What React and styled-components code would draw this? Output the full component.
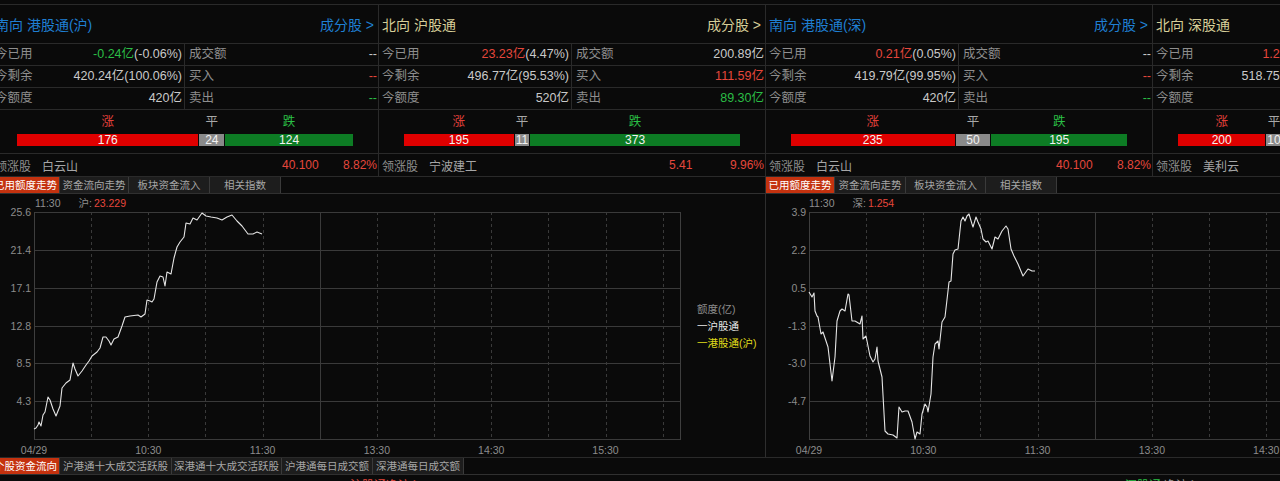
import styled, { createGlobalStyle } from "styled-components";

const FONT = `"Liberation Sans", "Noto Sans CJK SC", sans-serif`;

const C = {
  bg: "#0a0a0a",
  line: "#2a2a2a",
  label: "#8e8e8e",
  value: "#c9c9c9",
  up: "#e5473c",
  down: "#2bbd46",
  blue: "#1f7fd2",
  gold: "#d6ce98",
};

const tone = (t) => (t === "up" ? C.up : t === "down" ? C.down : C.value);

const GlobalStyle = createGlobalStyle`
  html, body {
    margin: 0;
    padding: 0;
    background: ${C.bg};
  }
  body {
    font-family: ${FONT};
    font-size: 12px;
    color: ${C.value};
    overflow: hidden;
  }
`;

const panels = [
  {
    dir: "南向",
    name: "港股通(沪)",
    north: false,
    used: ["-0.24亿", "down", "(-0.06%)"],
    remain: "420.24亿(100.06%)",
    quota: "420亿",
    turnover: ["--", "flat"],
    buy: ["--", "up"],
    sell: ["--", "down"],
    breadth: [176, 24, 124],
    leader: ["白云山", "40.100", "8.82%"],
  },
  {
    dir: "北向",
    name: "沪股通",
    north: true,
    used: ["23.23亿", "up", "(4.47%)"],
    remain: "496.77亿(95.53%)",
    quota: "520亿",
    turnover: ["200.89亿", "flat"],
    buy: ["111.59亿", "up"],
    sell: ["89.30亿", "down"],
    breadth: [195, 11, 373],
    leader: ["宁波建工", "5.41", "9.96%"],
  },
  {
    dir: "南向",
    name: "港股通(深)",
    north: false,
    used: ["0.21亿", "up", "(0.05%)"],
    remain: "419.79亿(99.95%)",
    quota: "420亿",
    turnover: ["--", "flat"],
    buy: ["--", "up"],
    sell: ["--", "down"],
    breadth: [235, 50, 195],
    leader: ["白云山", "40.100", "8.82%"],
  },
  {
    dir: "北向",
    name: "深股通",
    north: true,
    used: ["1.25亿", "up", "(0.24%)"],
    remain: "518.75亿(99.76%)",
    quota: "520亿",
    turnover: ["163.52亿", "flat"],
    buy: ["82.38亿", "up"],
    sell: ["81.14亿", "down"],
    breadth: [200, 10, 530],
    leader: ["美利云", "9.36", "10.00%"],
  },
];

const leftPts = [
  [34, 430], [36, 429], [38, 426], [39, 423], [41, 427], [43, 416], [45, 413], [48, 398],
  [50, 401], [53, 410], [56, 417], [60, 407], [62, 389], [66, 384], [70, 381], [73, 364],
  [75, 370], [78, 377], [82, 372], [86, 366], [89, 362], [92, 357], [97, 353], [100, 349],
  [103, 338], [106, 338], [109, 342], [111, 346], [114, 340], [118, 338], [122, 327],
  [125, 318], [130, 317], [138, 316], [141, 318], [145, 315], [147, 301], [150, 302],
  [152, 303], [154, 300], [157, 283], [160, 277], [163, 278], [165, 287], [167, 273],
  [171, 275], [174, 259], [177, 248], [180, 243], [184, 238], [186, 224], [190, 225],
  [193, 219], [197, 221], [202, 214], [206, 217], [211, 218], [217, 219], [222, 221],
  [227, 218], [232, 216], [237, 222], [242, 227], [248, 235], [253, 235], [257, 233],
  [262, 235],
];

const rightPts = [
  [809, 293], [812, 298], [814, 294], [815, 312], [817, 317], [818, 318], [821, 335],
  [823, 333], [827, 345], [828, 348], [832, 382], [835, 358], [837, 322], [840, 312],
  [842, 310], [845, 312], [848, 295], [849, 296], [852, 322], [855, 322], [860, 325],
  [862, 317], [863, 340], [866, 337], [870, 357], [873, 363], [875, 360], [877, 348],
  [878, 362], [882, 378], [885, 432], [888, 435], [893, 436], [897, 439], [899, 408],
  [902, 413], [905, 412], [908, 412], [912, 423], [915, 440], [917, 433], [920, 435],
  [922, 415], [925, 405], [927, 408], [928, 413], [931, 395], [933, 358], [935, 345],
  [938, 342], [939, 350], [942, 323], [945, 318], [948, 292], [949, 283], [951, 282],
  [953, 255], [955, 251], [958, 250], [961, 222], [963, 218], [965, 222], [967, 217],
  [969, 215], [972, 225], [973, 228], [976, 218], [978, 223], [981, 230], [983, 240],
  [986, 243], [988, 242], [992, 250], [995, 238], [998, 240], [1002, 232], [1006, 227],
  [1008, 230], [1011, 250], [1014, 257], [1018, 265], [1023, 277], [1028, 270],
  [1032, 272], [1035, 272],
];

function Card({ p }) {
  const [upN, flatN, downN] = p.breadth;
  return (
    <CardBox>
      <CardHead>
        <Title $north={p.north}>
          {p.dir} {p.name}
        </Title>
        <Constituents $north={p.north}>成分股 &gt;</Constituents>
      </CardHead>

      <StatRow>
        <StatCell $left>
          <Label>今已用</Label>
          <Value>
            <Tone $t={p.used[1]}>{p.used[0]}</Tone>
            {p.used[2]}
          </Value>
        </StatCell>
        <StatCell>
          <Label>成交额</Label>
          <Tone $t={p.turnover[1]}>{p.turnover[0]}</Tone>
        </StatCell>
      </StatRow>
      <StatRow>
        <StatCell $left>
          <Label>今剩余</Label>
          <Value>{p.remain}</Value>
        </StatCell>
        <StatCell>
          <Label>买入</Label>
          <Tone $t={p.buy[1]}>{p.buy[0]}</Tone>
        </StatCell>
      </StatRow>
      <StatRow>
        <StatCell $left>
          <Label>今额度</Label>
          <Value>{p.quota}</Value>
        </StatCell>
        <StatCell>
          <Label>卖出</Label>
          <Tone $t={p.sell[1]}>{p.sell[0]}</Tone>
        </StatCell>
      </StatRow>

      <Breadth>
        <Segment $grow={upN}>
          <SegLabel $t="up">涨</SegLabel>
          <SegBar $t="up">{upN}</SegBar>
        </Segment>
        <Segment $grow={flatN}>
          <SegLabel $t="flat">平</SegLabel>
          <SegBar $t="flat">{flatN}</SegBar>
        </Segment>
        <Segment $grow={downN}>
          <SegLabel $t="down">跌</SegLabel>
          <SegBar $t="down">{downN}</SegBar>
        </Segment>
      </Breadth>

      <Leader>
        <div>
          <Label>领涨股</Label>
          <LeaderName>{p.leader[0]}</LeaderName>
        </div>
        <Tone $t="up">{p.leader[1]}</Tone>
        <Tone $t="up">{p.leader[2]}</Tone>
      </Leader>
    </CardBox>
  );
}

function Tabs({ items, widths, active = 0 }) {
  return (
    <TabBar>
      {items.map((t, i) => (
        <Tab key={t} $w={widths[i]} $active={i === active}>
          {t}
        </Tab>
      ))}
    </TabBar>
  );
}

const chartTabs = ["已用额度走势", "资金流向走势", "板块资金流入", "相关指数"];

function TrendChart({ width, originX, left, right, yLabels, xLabels, points, legend }) {
  const top = 213;
  const bottom = 440;
  const rowH = (bottom - top) / 6;
  const step = 57.15;
  const verticals = [];
  for (let i = 1; left + i * step < right - 4; i++) verticals.push(i);
  const px = (v) => Math.round(v) + 0.5;
  const d = points.map(([x, y], i) => `${i ? "L" : "M"}${x} ${y}`).join(" ");

  return (
    <ChartSvg width={width} height={246}>
      <g transform={`translate(${-originX} -212)`}>
        {[0, 1, 2, 3, 4, 5, 6].map((i) => (
          <line
            key={"h" + i}
            x1={left}
            x2={right}
            y1={px(top + i * rowH)}
            y2={px(top + i * rowH)}
            stroke="#3a3a3a"
          />
        ))}
        {verticals.map((i) => (
          <line
            key={"v" + i}
            x1={px(left + i * step)}
            x2={px(left + i * step)}
            y1={top}
            y2={bottom + 1}
            stroke="#3a3a3a"
            strokeDasharray={i === 5 ? undefined : "3 3"}
          />
        ))}
        <line x1={px(left)} x2={px(left)} y1={top} y2={bottom + 1} stroke="#3e3e3e" />
        <line x1={px(right)} x2={px(right)} y1={top} y2={bottom + 1} stroke="#3e3e3e" />

        {yLabels.map((t, i) => (
          <AxisText key={t} x={left - 3} y={top + i * rowH + 4} textAnchor="end">
            {t}
          </AxisText>
        ))}
        {xLabels.map(([t, slot]) => (
          <AxisText key={t} x={left + slot * step} y={455} textAnchor="middle">
            {t}
          </AxisText>
        ))}

        <path d={d} fill="none" stroke="#e6e6e6" strokeWidth="1.1" strokeLinejoin="round" />

        {legend && (
          <g>
            <AxisText x={697} y={314}>额度(亿)</AxisText>
            <AxisText x={697} y={331} fill="#e8e8e8">一沪股通</AxisText>
            <AxisText x={697} y={348} fill="#e0dc1a">一港股通(沪)</AxisText>
          </g>
        )}
      </g>
    </ChartSvg>
  );
}

export default function App() {
  return (
    <Page>
      <GlobalStyle />
      <Shift>
        <Cards>
          {panels.map((p) => (
            <Card key={p.name} p={p} />
          ))}
        </Cards>

        <Charts>
          <ChartPanel $w={773}>
            <Tabs items={chartTabs} widths={[68, 69, 81, 71]} />
            <ChartBody>
              <Info>
                <span>11:30</span>
                <InfoKey>沪:</InfoKey>
                <Tone $t="up">23.229</Tone>
              </Info>
              <TrendChart
                width={773}
                originX={-8}
                left={34}
                right={680}
                yLabels={["25.6", "21.4", "17.1", "12.8", "8.5", "4.3"]}
                xLabels={[["04/29", 0], ["10:30", 2], ["11:30", 4], ["13:30", 6], ["14:30", 8], ["15:30", 10]]}
                points={leftPts}
                legend
              />
            </ChartBody>
          </ChartPanel>

          <ChartPanel $w={760}>
            <Tabs items={chartTabs} widths={[69, 71, 80, 71]} />
            <ChartBody>
              <Info>
                <span>11:30</span>
                <InfoKey>深:</InfoKey>
                <Tone $t="up">1.254</Tone>
              </Info>
              <TrendChart
                width={760}
                originX={766}
                left={809}
                right={1455}
                yLabels={["3.9", "2.2", "0.5", "-1.3", "-3.0", "-4.7"]}
                xLabels={[["04/29", 0], ["10:30", 2], ["11:30", 4], ["13:30", 6], ["14:30", 8], ["15:30", 10]]}
                points={rightPts}
              />
            </ChartBody>
          </ChartPanel>
        </Charts>

        <Tabs
          items={["个股资金流向", "沪港通十大成交活跃股", "深港通十大成交活跃股", "沪港通每日成交额", "深港通每日成交额"]}
          widths={[68, 112, 110, 91, 91]}
        />

        <Footer>
          <FooterText $at={358} $t="up">沪股通净流入</FooterText>
          <FooterText $at={1133} $t="down">深股通</FooterText>
          <FooterText $at={1172} $t="flat">净流入</FooterText>
        </Footer>
      </Shift>
    </Page>
  );
}

const Page = styled.div`
  width: 1280px;
  height: 481px;
  overflow: hidden;
  padding-top: 4px;
  box-sizing: border-box;
  background: ${C.bg};
`;

const Shift = styled.div`
  width: 1548px;
  margin-left: -8px;
`;

const Cards = styled.div`
  display: flex;
  border-top: 1px solid ${C.line};
  border-bottom: 1px solid ${C.line};
`;

const CardBox = styled.section`
  flex: 0 0 386px;
  border-right: 1px solid ${C.line};
`;

const CardHead = styled.header`
  height: 38px;
  display: flex;
  align-items: center;
  justify-content: space-between;
  padding: 0 4px 0 3px;
  border-bottom: 1px solid ${C.line};
  font-size: 14px;
`;

const Title = styled.h3`
  margin: 0;
  font-size: 14px;
  font-weight: 400;
  color: ${(p) => (p.$north ? C.gold : C.blue)};
`;

const Constituents = styled.span`
  color: ${(p) => (p.$north ? C.gold : C.blue)};
`;

const StatRow = styled.div`
  display: grid;
  grid-template-columns: 193px 1fr;
  height: 21px;
  border-bottom: 1px solid ${C.line};
  font-size: 12.5px;
  line-height: 21px;
`;

const StatCell = styled.div`
  display: flex;
  justify-content: space-between;
  padding: ${(p) => (p.$left ? "0 2px 0 3px" : "0 1px 0 4px")};
  border-right: ${(p) => (p.$left ? `1px solid ${C.line}` : "none")};
  white-space: nowrap;
  overflow: hidden;
`;

const Label = styled.span`
  color: ${C.label};
`;

const Value = styled.span`
  color: ${C.value};
`;

const Tone = styled.span`
  color: ${(p) => tone(p.$t)};
`;

const Breadth = styled.div`
  display: flex;
  gap: 1px;
  padding: 4px 25px 7px;
  border-bottom: 1px solid ${C.line};
`;

const Segment = styled.div`
  flex: ${(p) => p.$grow} 1 0;
  display: flex;
  flex-direction: column;
`;

const SegLabel = styled.div`
  height: 17px;
  line-height: 17px;
  text-align: center;
  font-size: 12.5px;
  color: ${(p) => (p.$t === "up" ? "#e0403a" : p.$t === "down" ? "#2ac046" : "#a8a8a8")};
`;

const SegBar = styled.div`
  margin-top: 3px;
  height: 12px;
  line-height: 12px;
  padding: 0 1px;
  text-align: center;
  font-size: 12px;
  color: #f2f2f2;
  white-space: nowrap;
  background: ${(p) => (p.$t === "up" ? "#e00000" : p.$t === "down" ? "#0d7c24" : "#8a8a8a")};
`;

const Leader = styled.div`
  display: grid;
  grid-template-columns: 287px 1fr auto;
  align-items: center;
  height: 22px;
  padding: 0 1px 0 3px;
  font-size: 12px;
  white-space: nowrap;
`;

const LeaderName = styled.span`
  margin-left: 11px;
  color: #a6a6a6;
`;

const Charts = styled.div`
  display: flex;
  border-bottom: 1px solid ${C.line};
`;

const ChartPanel = styled.section`
  flex: 0 0 ${(p) => p.$w}px;
  border-right: 1px solid #2e2e2e;
`;

const TabBar = styled.nav`
  display: flex;
  height: 16px;
  border-bottom: 1px solid #303030;
`;

const Tab = styled.div`
  flex: 0 0 ${(p) => p.$w}px;
  box-sizing: border-box;
  border-right: 1px solid #3a3a3a;
  background: ${(p) => (p.$active ? "#c4320f" : "#1d1d1d")};
  color: ${(p) => (p.$active ? "#ffffff" : "#a6a6a6")};
  font-size: 10.5px;
  line-height: 16px;
  text-align: center;
  white-space: nowrap;
  overflow: hidden;
`;

const ChartBody = styled.div`
  height: 263px;
  display: flex;
  flex-direction: column;
`;

const Info = styled.div`
  height: 17px;
  display: flex;
  align-items: center;
  padding-left: 43px;
  font-size: 10.5px;
  color: ${C.label};
`;

const InfoKey = styled.span`
  margin: 0 2px 0 18px;
`;

const ChartSvg = styled.svg`
  display: block;
  overflow: visible;
`;

const AxisText = styled.text`
  font-family: ${FONT};
  font-size: 10.5px;
  fill: ${(p) => p.fill || "#8c8c8c"};
`;

const Footer = styled.div`
  position: relative;
  height: 16px;
  font-size: 12px;
  line-height: 16px;
`;

const FooterText = styled.span`
  position: absolute;
  left: ${(p) => p.$at}px;
  top: 3px;
  color: ${(p) => (p.$t === "flat" ? "#9a9a9a" : tone(p.$t))};
`;
